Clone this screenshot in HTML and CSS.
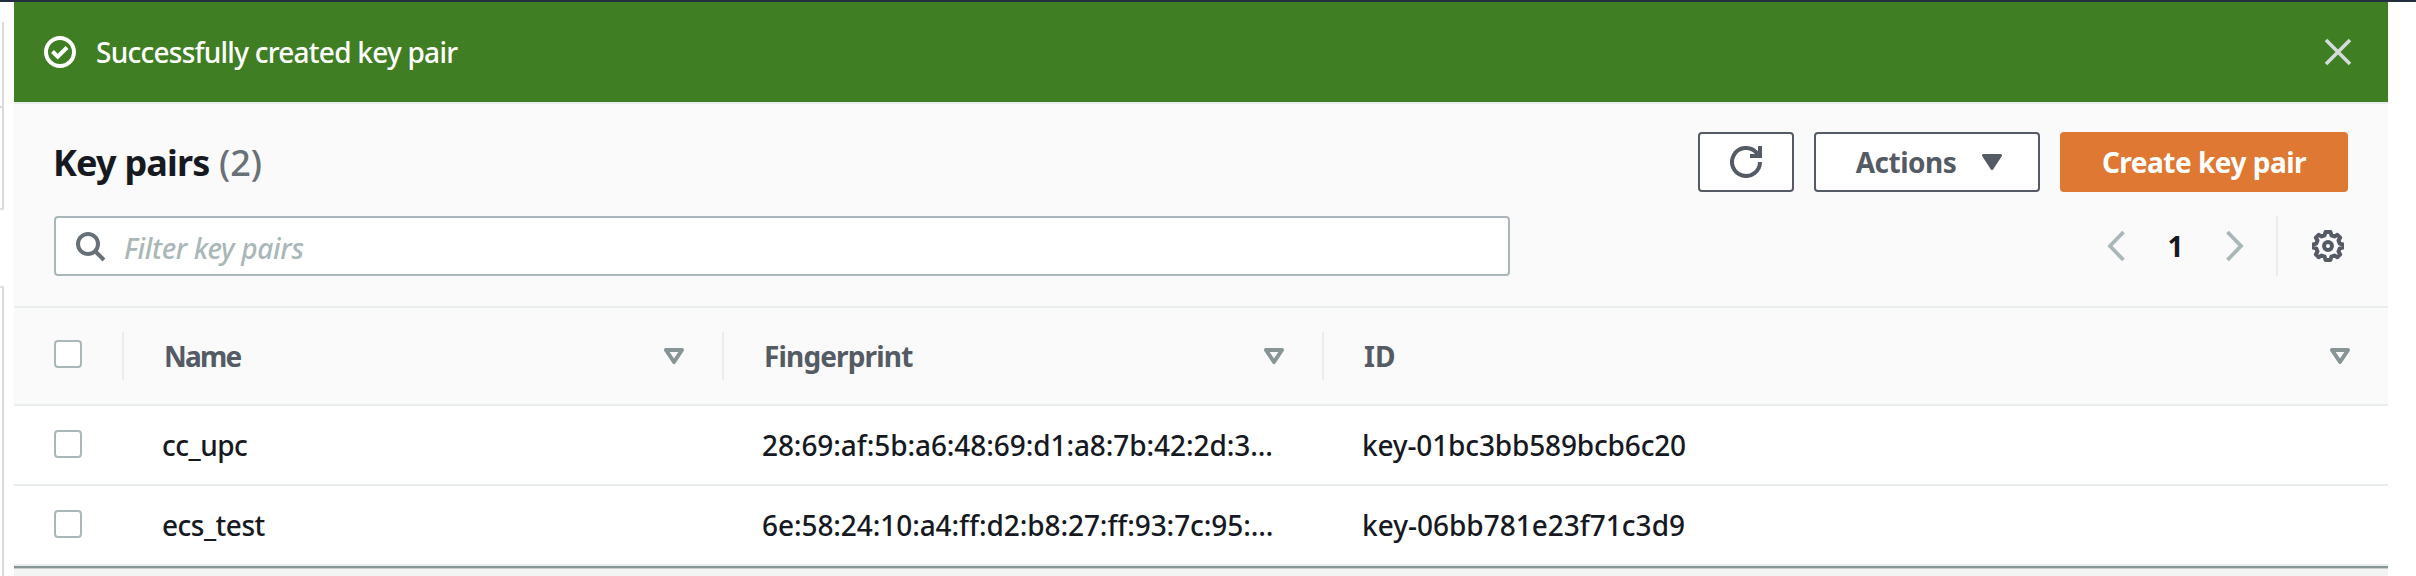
FILE: index.html
```html
<!DOCTYPE html>
<html lang="en">
<head>
<meta charset="utf-8">
<title>Key pairs</title>
<link rel="stylesheet" href="styles.css">
</head>
<body>
<div class="topbar"></div>
<div class="layout">
  <aside class="side">
    <div class="side-box side-box-first"><div class="side-rule"></div></div>
    <div class="side-box side-box-second"></div>
  </aside>
  <main class="main">
    <div class="flash">
      <svg class="flash-icon" viewBox="0 0 32 32"><circle cx="16" cy="16" r="14"/><path d="M8.5 15.5l5.2 5.2 9.3-9.2"/></svg>
      <span class="flash-text">Successfully created key pair</span>
      <svg class="flash-close" viewBox="0 0 28 28"><path d="M2 2l24 24M26 2L2 26"/></svg>
    </div>
    <section class="panel-head">
      <div class="title-row">
        <h2 class="title"><span class="title-name">Key pairs</span> <span class="count">(2)</span></h2>
        <div class="actions">
          <button class="btn btn-icon" aria-label="Refresh">
            <svg class="icon" viewBox="0 0 32 32"><path d="M30 16a14 14 0 1 1-4-9.8L28.5 9"/><path d="M30 0v10H20"/></svg>
          </button>
          <button class="btn btn-menu"><span>Actions</span><svg class="caret" viewBox="0 0 20 16"><path d="M1.5 1.5h17L10 14.5z"/></svg></button>
          <button class="btn btn-primary">Create key pair</button>
        </div>
      </div>
      <div class="tools-row">
        <div class="search">
          <svg class="search-icon" viewBox="0 0 32 32"><circle cx="13" cy="13" r="10"/><path d="M20 20l9 9"/></svg>
          <span class="placeholder">Filter key pairs</span>
        </div>
        <div class="pager">
          <svg class="chev" viewBox="0 0 18 32"><path d="M16.5 2L3 16l13.500 14"/></svg>
          <span class="page">1</span>
          <svg class="chev" viewBox="0 0 18 32"><path d="M1.500 2L15 16L1.500 30"/></svg>
        </div>
        <div class="prefs">
          <svg class="icon gear" viewBox="0 0 32 32"><path d="M13.500 2h5l.9 3.300 3 1.200 3-1.700 2.800 2.800-1.700 3 1.200 3 3.100.9v3l-3.100.9-1.200 3 1.700 3-2.800 2.800-3-1.700-3 1.200-.9 3.300h-5l-.9-3.300-3-1.200-3 1.700-2.800-2.800 1.700-3-1.200-3-3.100-.9v-3l3.100-.9 1.200-3-1.700-3 2.800-2.800 3 1.700 3-1.200z"/><circle cx="16" cy="16" r="4"/></svg>
        </div>
      </div>
    </section>
    <div class="row row-head">
      <div class="cell cell-check"><span class="check"></span></div>
      <div class="cell"><span class="h-name">Name</span><svg class="sort" viewBox="0 0 20 16"><path d="M2 2h16l-8 12z"/></svg></div>
      <div class="cell"><span class="h-print">Fingerprint</span><svg class="sort" viewBox="0 0 20 16"><path d="M2 2h16l-8 12z"/></svg></div>
      <div class="cell"><span class="h-id">ID</span><svg class="sort" viewBox="0 0 20 16"><path d="M2 2h16l-8 12z"/></svg></div>
    </div>
    <div class="row">
      <div class="cell cell-check"><span class="check"></span></div>
      <div class="cell cell-name">cc_upc</div>
      <div class="cell cell-print">28:69:af:5b:a6:48:69:d1:a8:7b:42:2d:3…</div>
      <div class="cell cell-id">key-01bc3bb589bcb6c20</div>
    </div>
    <div class="row">
      <div class="cell cell-check"><span class="check"></span></div>
      <div class="cell cell-name">ecs_test</div>
      <div class="cell cell-print">6e:58:24:10:a4:ff:d2:b8:27:ff:93:7c:95:…</div>
      <div class="cell">key-06bb781e23f71c3d9</div>
    </div>
    <div class="splitter"></div>
  </main>
</div>
</body>
</html>
```
FILE: styles.css
```css
* { box-sizing: border-box; }

body {
  margin: 0;
  height: 576px;
  overflow: hidden;
  background: #fff;
  color: #16191f;
  font: 500 28px/40px "Noto Sans", "Open Sans", sans-serif;
}

svg { display: block; flex: none; fill: none; }

.topbar { height: 2px; background: #232f3e; }
.layout { display: flex; height: 574px; }

/* edge of the navigation column */
.side { width: 14px; padding-top: 20px; flex: none; }
.side-box { width: 4px; border-right: 2px solid #d9dbdb; }
.side-box-first { height: 188px; padding-top: 84px; border-bottom: 2px solid #e0e2e2; }
.side-rule { height: 2px; background: #d9dbdb; }
.side-box-second { height: 290px; margin-top: 76px; border-top: 2px solid #e0e2e2; }

.main { width: 2374px; display: flex; flex-direction: column; }

.flash {
  display: flex;
  align-items: center;
  height: 100px;
  flex: none;
  padding: 0 36px 0 30px;
  background: #3f7e23;
  color: #fff;
}
.flash-icon { width: 32px; height: 32px; stroke: #fff; stroke-width: 4; }
.flash-text { margin: -1px auto 0 20px; letter-spacing: -0.750px; }
.flash-close { width: 28px; height: 28px; stroke: #d5dbdb; stroke-width: 3.600; }

.panel-head {
  height: 204px;
  flex: none;
  padding: 28px 40px 0;
  border-top: 2px solid #eaeded;
  background: #fafafa;
}
.title-row { display: flex; align-items: center; justify-content: space-between; height: 60px; }
.title { margin: 2px 0 0 -1px; font-size: 36px; line-height: 48px; }
.title-name { letter-spacing: -0.800px; }
.count { font-weight: 500; color: #687078; }

.actions { display: flex; gap: 20px; }
.btn {
  display: flex;
  align-items: center;
  justify-content: center;
  height: 60px;
  padding: 0;
  border: 2px solid #545b64;
  border-radius: 4px;
  background: #fff;
  color: #545b64;
  font: 700 28px/40px "Noto Sans", "Open Sans", sans-serif;
  letter-spacing: -0.500px;
}
.btn-icon { width: 96px; }
.btn-menu { width: 226px; gap: 26px; padding-left: 4px; }
.btn-primary { width: 288px; border-color: #df7832; background: #df7832; color: #fff; }
.icon { width: 32px; height: 32px; stroke: #545b64; stroke-width: 4; }
.caret { width: 20px; height: 16px; fill: #545b64; stroke: #545b64; stroke-width: 3; stroke-linejoin: round; }

.tools-row { display: flex; align-items: center; height: 60px; margin-top: 24px; }
.search {
  display: flex;
  align-items: center;
  gap: 17px;
  width: 1456px;
  height: 60px;
  padding-left: 19px;
  border: 2px solid #aab7b8;
  border-radius: 4px;
  background: #fff;
}
.search-icon { width: 32px; height: 32px; margin-top: 2px; stroke: #687078; stroke-width: 4; }
.placeholder { margin-top: 3px; color: #aab7b8; font-style: italic; letter-spacing: -0.300px; }

.pager { display: flex; align-items: center; margin-left: auto; margin-right: 32px; }
.chev { width: 18px; height: 32px; stroke: #aab7b8; stroke-width: 3.800; }
.page { width: 101px; text-align: center; font-weight: 700; }
.prefs {
  display: flex;
  align-items: center;
  width: 72px;
  height: 60px;
  padding-left: 34px;
  border-left: 2px solid #eaeded;
}
.gear { stroke-linejoin: round; }

.row {
  display: grid;
  grid-template-columns: 110px 600px 600px 1fr;
  align-items: center;
  height: 80px;
  flex: none;
  border-bottom: 2px solid #eaeded;
}
.row-head {
  height: 100px;
  border-top: 2px solid #eaeded;
  background: #fafafa;
  color: #545b64;
  font-weight: 700;
}
.cell { padding-left: 38px; white-space: nowrap; }
.cell-check { padding-left: 40px; }
.cell-name { letter-spacing: -0.500px; }
.cell-print { letter-spacing: -0.080px; }
.cell-id { letter-spacing: -0.150px; }
.row-head .cell {
  display: flex;
  align-items: center;
  justify-content: space-between;
  height: 48px;
  padding-right: 38px;
  border-right: 2px solid #eaeded;
}
.row-head .cell-check { padding-right: 0; }
.row-head .cell:last-child { border-right: 0; }
.row-head .cell:not(.cell-check) { padding-left: 40px; }
.h-name { letter-spacing: -1.800px; }
.h-print { letter-spacing: -0.850px; }
.sort { width: 20px; height: 16px; stroke: #879596; stroke-width: 4; stroke-linejoin: round; }

.check {
  display: block;
  width: 28px;
  height: 28px;
  margin-top: -2px;
  border: 2px solid #aab7b8;
  border-radius: 4px;
  background: #fff;
}
.row-head .check { margin-top: -4px; }

.splitter { flex: 1; border-top: 2px solid #879596; background: #f2f3f3; box-shadow: inset 0 1px 0 #c8cece; }
```
